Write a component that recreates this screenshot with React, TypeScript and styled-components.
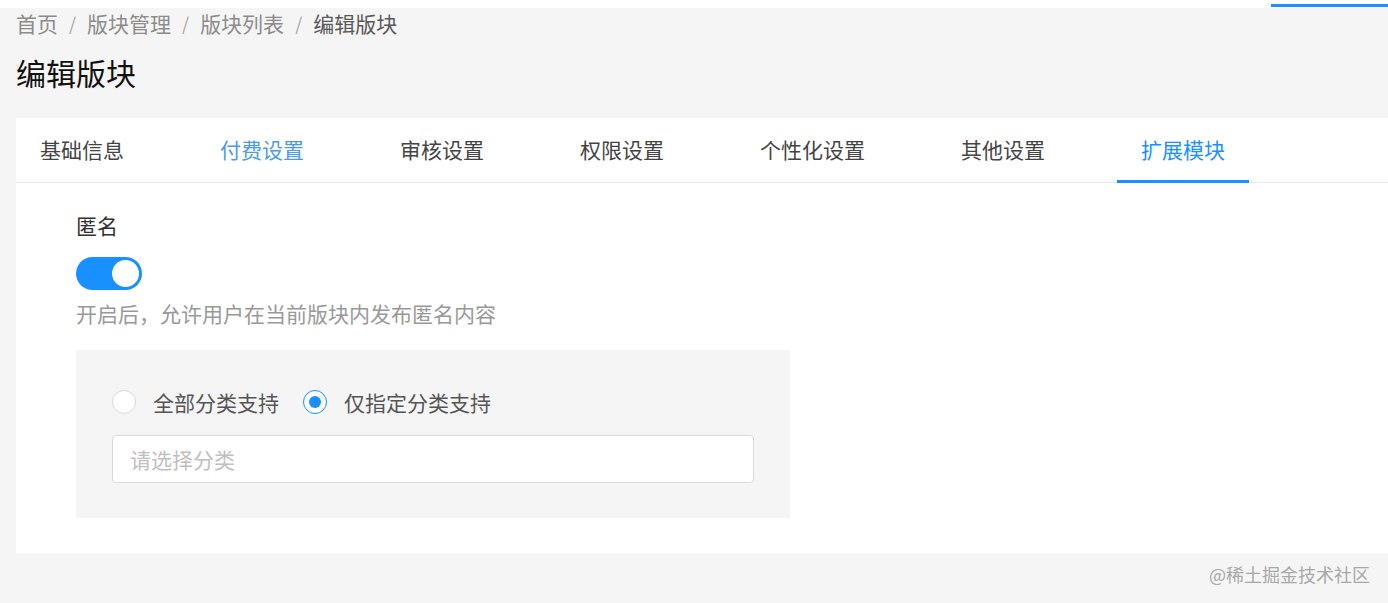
import React, { useState } from "react";
import styled, { createGlobalStyle } from "styled-components";

const GlobalStyle = createGlobalStyle`
  html, body {
    margin: 0;
    padding: 0;
    background: #f5f5f5;
    font-family: "Noto Sans CJK SC", "Noto Sans", sans-serif;
  }
`;

const Page = styled.div`
  width: 1388px;
  height: 603px;
  overflow: hidden;
  background: #f5f5f5;
  display: flex;
  flex-direction: column;
`;

const TopStrip = styled.div`
  height: 8px;
  background: #fff;
  display: flex;
  justify-content: flex-end;
  align-items: flex-end;
`;

const Progress = styled.div`
  width: 117px;
  height: 3px;
  margin-bottom: 1px;
  background: #1890ff;
`;

const Header = styled.div`
  padding: 0 16px;
`;

const Crumbs = styled.div`
  display: flex;
  align-items: center;
  height: 30px;
  font-size: 21px;
  color: #8c8c8c;
`;

const Crumb = styled.span<{ $current?: boolean }>`
  color: ${p => (p.$current ? "#595959" : "#8c8c8c")};
`;

const Sep = styled.span`
  margin: 0 11px;
  color: #a6a6a6;
  font-size: 18px;
`;

const Title = styled.h1`
  margin: 12px 0 0;
  height: 56px;
  font-size: 30px;
  font-weight: 400;
  line-height: 44px;
  color: #111;
`;

const Card = styled.div`
  margin-left: 16px;
  margin-top: 12px;
  background: #fff;
  height: 435px;
  display: flex;
  flex-direction: column;
`;

const TabBar = styled.div`
  display: flex;
  height: 65px;
  border-bottom: 1px solid #e8e8e8;
  box-sizing: border-box;
`;

const Tab = styled.div<{ $active?: boolean; $hover?: boolean }>`
  position: relative;
  padding: 0 24px 2px;
  margin-right: 48px;
  display: flex;
  align-items: center;
  font-size: 21px;
  color: ${p => (p.$active ? "#1890ff" : p.$hover ? "#4a9be8" : "#444")};
  cursor: pointer;
  &::after {
    content: "";
    position: absolute;
    left: 0;
    right: 0;
    bottom: -1px;
    height: 3px;
    background: ${p => (p.$active ? "#1890ff" : "transparent")};
  }
`;

const Body = styled.div`
  padding: 28px 60px 0;
`;

const Label = styled.div`
  font-size: 21px;
  color: #333;
  line-height: 28px;
`;

const Switch = styled.button<{ $on: boolean }>`
  margin-top: 18px;
  width: 66px;
  height: 33px;
  border: none;
  border-radius: 17px;
  padding: 0;
  background: ${p => (p.$on ? "#1890ff" : "#bfbfbf")};
  position: relative;
  cursor: pointer;
  display: block;
  &::after {
    content: "";
    position: absolute;
    top: 3px;
    left: ${p => (p.$on ? "36px" : "3px")};
    width: 27px;
    height: 27px;
    border-radius: 50%;
    background: #fff;
  }
`;

const Hint = styled.div`
  margin-top: 8px;
  font-size: 21px;
  color: #999;
  line-height: 30px;
`;

const Panel = styled.div`
  margin-top: 22px;
  width: 714px;
  height: 168px;
  box-sizing: border-box;
  background: #f5f5f5;
  padding: 38px 36px 0;
`;

const RadioRow = styled.div`
  display: flex;
  align-items: center;
  height: 28px;
`;

const RadioItem = styled.label`
  display: flex;
  align-items: center;
  margin-right: 24px;
  font-size: 21px;
  line-height: 28px;
  color: #555;
  cursor: pointer;
`;

const Circle = styled.span<{ $checked?: boolean }>`
  width: 24px;
  height: 24px;
  box-sizing: border-box;
  border-radius: 50%;
  background: #fff;
  border: 1px solid ${p => (p.$checked ? "#1890ff" : "#d9d9d9")};
  margin-right: 17px;
  display: flex;
  align-items: center;
  justify-content: center;
  &::after {
    content: "";
    width: 12px;
    height: 12px;
    border-radius: 50%;
    background: ${p => (p.$checked ? "#1890ff" : "transparent")};
  }
`;

const Select = styled.div`
  margin-top: 19px;
  width: 642px;
  height: 48px;
  box-sizing: border-box;
  border: 1px solid #d9d9d9;
  border-radius: 4px;
  background: #fff;
  padding: 0 17px;
  display: flex;
  align-items: center;
  font-size: 21px;
  color: #bfbfbf;
`;

const Watermark = styled.div`
  margin-top: 8px;
  padding-right: 18px;
  text-align: right;
  font-size: 18px;
  color: #a8a8a8;
  line-height: 26px;
`;

const tabs = ["基础信息", "付费设置", "审核设置", "权限设置", "个性化设置", "其他设置", "扩展模块"];

export default function App(): JSX.Element {
  const [on, setOn] = useState(true);
  const [scope, setScope] = useState("some");

  return (
    <Page>
      <GlobalStyle />
      <TopStrip>
        <Progress />
      </TopStrip>
      <Header>
        <Crumbs>
          <Crumb>首页</Crumb>
          <Sep>/</Sep>
          <Crumb>版块管理</Crumb>
          <Sep>/</Sep>
          <Crumb>版块列表</Crumb>
          <Sep>/</Sep>
          <Crumb $current>编辑版块</Crumb>
        </Crumbs>
        <Title>编辑版块</Title>
      </Header>
      <Card>
        <TabBar>
          {tabs.map((t, i) => (
            <Tab key={t} $active={i === 6} $hover={i === 1}>
              {t}
            </Tab>
          ))}
        </TabBar>
        <Body>
          <Label>匿名</Label>
          <Switch $on={on} onClick={() => setOn(!on)} />
          <Hint>开启后，允许用户在当前版块内发布匿名内容</Hint>
          <Panel>
            <RadioRow>
              <RadioItem onClick={() => setScope("all")}>
                <Circle $checked={scope === "all"} />
                全部分类支持
              </RadioItem>
              <RadioItem onClick={() => setScope("some")}>
                <Circle $checked={scope === "some"} />
                仅指定分类支持
              </RadioItem>
            </RadioRow>
            <Select>请选择分类</Select>
          </Panel>
        </Body>
      </Card>
      <Watermark>@稀土掘金技术社区</Watermark>
    </Page>
  );
}
